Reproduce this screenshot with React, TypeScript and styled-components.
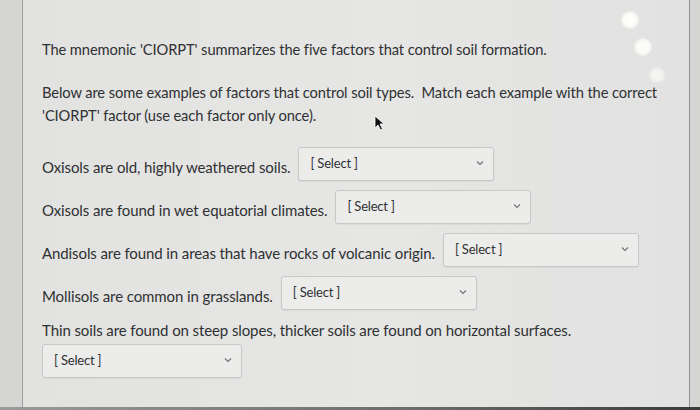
import React from "react";
import styled, { createGlobalStyle } from "styled-components";

const GlobalStyle = createGlobalStyle`
  html, body {
    margin: 0;
    padding: 0;
    background: #d4d4d3;
  }
  body {
    font-family: Lato, "Open Sans", "Liberation Sans", sans-serif;
    color: #2f3133;
  }
`;

const Screen = styled.div`
  position: relative;
  width: 700px;
  height: 410px;
  overflow: hidden;
  display: flex;
  flex-direction: column;
  background: #d5d5d4;
`;

const Frame = styled.div`
  flex: 1;
  display: flex;
  padding-left: 22px;
  padding-right: 10px;
`;

const Panel = styled.main`
  flex: 1;
  border-left: 1px solid #9d9e9e;
  border-right: 1px solid #8f9090;
  background: linear-gradient(90deg, #e2e2e0 0%, #e6e6e4 55%, #e1e2e1 100%);
  padding: 38px 8px 0 19px;
  font-size: 14.7px;
  line-height: 23px;
`;

const Para = styled.p`
  margin: 0 0 20px 0;
  letter-spacing: -0.1px;
`;

const Row = styled.div`
  display: flex;
  align-items: center;
  gap: 8px;
  height: 34px;
  margin-bottom: 9px;
  font-size: 15px;
  letter-spacing: -0.1px;
`;

const Sentence = styled.span`
  padding-top: 6px;
`;

const Stacked = styled.div`
  display: flex;
  flex-direction: column;
  gap: 2px;
  font-size: 15px;
  letter-spacing: -0.1px;
`;

const SelectBox = styled.div<{ $width?: number }>`
  box-sizing: border-box;
  width: ${(p) => p.$width ?? 196}px;
  height: 34px;
  display: flex;
  align-items: center;
  justify-content: space-between;
  padding: 0 9px 2px 11px;
  background: #ececeb;
  border: 1px solid #c6c8c8;
  border-radius: 3px;
  box-shadow: 0 1px 1px rgba(0, 0, 0, 0.05);
  font-size: 13px;
  color: #2f3133;
  letter-spacing: -0.2px;
`;

const Chevron = styled.svg`
  width: 8px;
  height: 6px;
  flex: none;
`;

const BottomEdge = styled.div`
  height: 3px;
  background: linear-gradient(90deg, #9a9a9a 0%, #6b6b6b 60%, #3a3a3a 100%);
`;

const Glare = styled.div<{ $x: number; $y: number; $r: number; $a: number }>`
  position: absolute;
  left: ${(p) => p.$x - p.$r}px;
  top: ${(p) => p.$y - p.$r}px;
  width: ${(p) => p.$r * 2}px;
  height: ${(p) => p.$r * 2}px;
  border-radius: 50%;
  background: radial-gradient(circle, rgba(255, 255, 250, ${(p) => p.$a}) 40%, rgba(255, 255, 250, 0) 100%);
`;

const Cursor = styled.svg`
  position: absolute;
  left: 374px;
  top: 115px;
  width: 12px;
  height: 16px;
`;

function Select({ width }: { width?: number }) {
  return (
    <SelectBox $width={width}>
      <span>[ Select ]</span>
      <Chevron viewBox="0 0 8 6">
        <path d="M1 1.5 L4 4.5 L7 1.5" fill="none" stroke="#6f7375" strokeWidth="1.1" />
      </Chevron>
    </SelectBox>
  );
}

const rows = [
  "Oxisols are old, highly weathered soils.",
  "Oxisols are found in wet equatorial climates.",
  "Andisols are found in areas that have rocks of volcanic origin.",
  "Mollisols are common in grasslands.",
];

export default function App() {
  return (
    <>
      <GlobalStyle />
      <Screen>
        <Frame>
          <Panel>
            <Para>The mnemonic 'CIORPT' summarizes the five factors that control soil formation.</Para>
            <Para>
              Below are some examples of factors that control soil types.&nbsp; Match each example with the correct
              'CIORPT' factor (use each factor only once).
            </Para>
            {rows.map((r) => (
              <Row key={r}>
                <Sentence>{r}</Sentence>
                <Select />
              </Row>
            ))}
            <Stacked>
              <span>Thin soils are found on steep slopes, thicker soils are found on horizontal surfaces.</span>
              <Select width={200} />
            </Stacked>
          </Panel>
        </Frame>
        <BottomEdge />
        <Glare $x={630} $y={20} $r={9} $a={0.95} />
        <Glare $x={643} $y={47} $r={9} $a={0.9} />
        <Glare $x={657} $y={75} $r={8} $a={0.6} />
        <Cursor viewBox="0 0 12 16">
          <path d="M1 1 L1 13 L4 10 L6.5 15 L8.5 14 L6 9 L10 9 Z" fill="#111" stroke="#fff" strokeWidth="0.8" />
        </Cursor>
      </Screen>
    </>
  );
}
